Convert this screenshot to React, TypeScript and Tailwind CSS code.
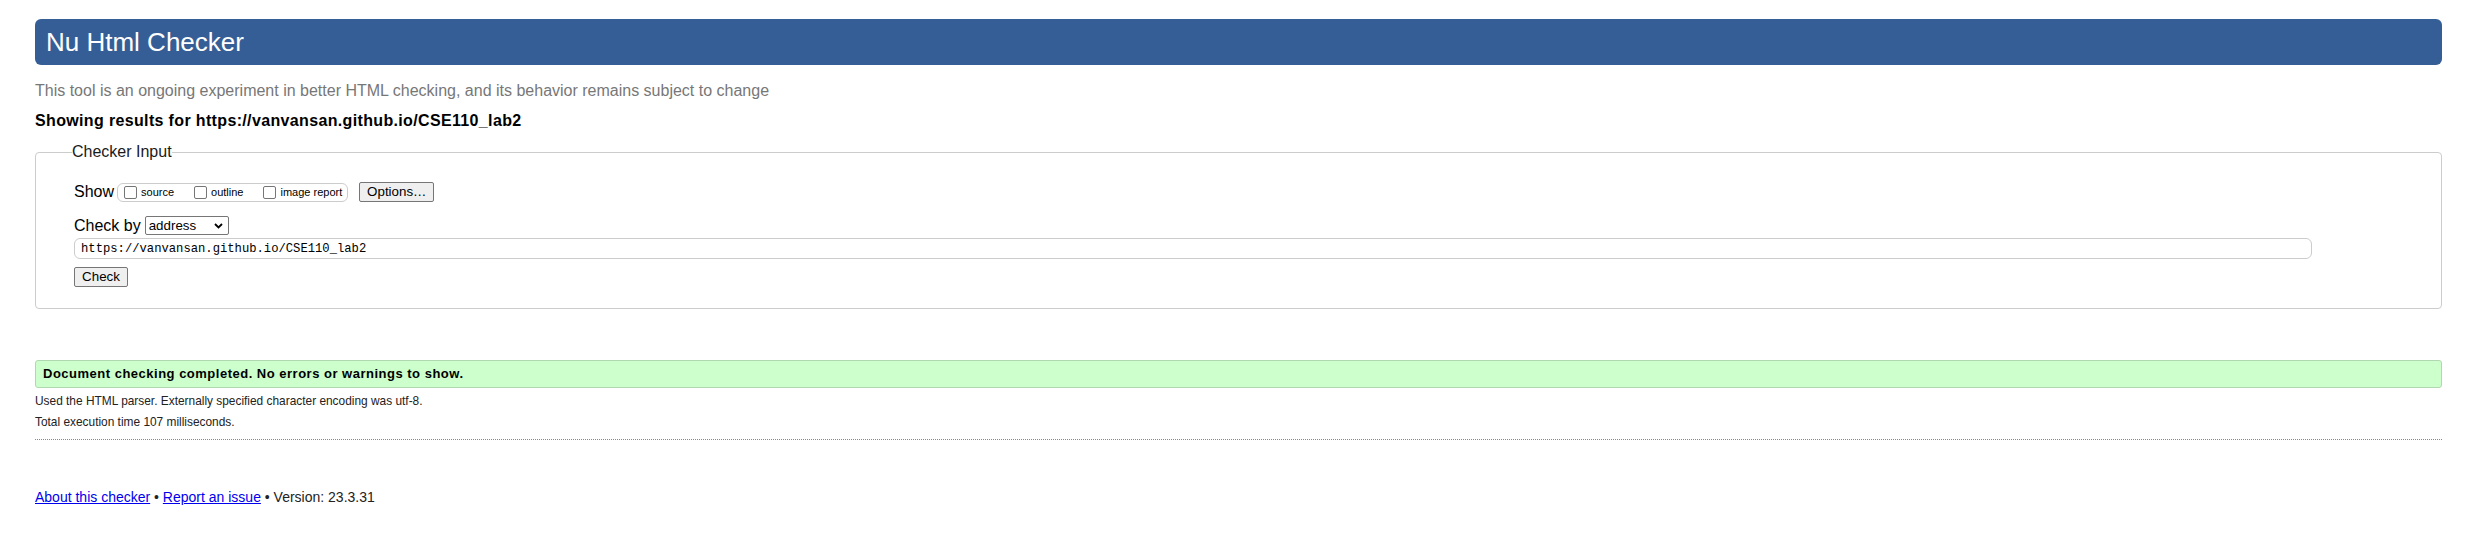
import React from "react";

function Box({ label }: { label: string }) {
  return (
    <label className="flex items-center">
      <input
        type="checkbox"
        className="appearance-none m-0 w-[13px] h-[13px] border border-[#767676] rounded-[2px] bg-white"
      />
      <span className="ml-[4px] text-[11px] leading-[13px] text-black">{label}</span>
    </label>
  );
}

export default function App() {
  return (
    <div
      className="px-[35px] pt-[19px] pb-[20px] bg-white text-black"
      style={{ fontFamily: '"Liberation Sans", Arial, sans-serif' }}
    >
      <div className="h-[46px] bg-[#365e96] rounded-[6px] flex items-center pl-[11px]">
        <h1 className="text-[26px] leading-[30px] text-white font-normal">Nu Html Checker</h1>
      </div>

      <p className="mt-[17px] text-[16px] leading-[18px] text-[#777777]">
        This tool is an ongoing experiment in better HTML checking, and its behavior remains subject to change
      </p>
      <p className="mt-[12px] text-[16px] leading-[18px] font-bold text-black tracking-[0.35px]">
        Showing results for https://vanvansan.github.io/CSE110_lab2
      </p>

      <fieldset className="mt-[13px] border border-[#cccccc] rounded-[4px] pl-[38px] pr-[38px] pb-[21px]">
        <legend className="ml-[-2px] text-[16px] leading-[18px] text-[#1a1a1a]">Checker Input</legend>

        <div className="mt-[21px] h-[20px] flex items-center">
          <span className="text-[16px] leading-[18px]">Show</span>
          <div className="ml-[3px] h-[19px] flex items-center border border-[#cccccc] rounded-[6px] pl-[6px] pr-[5px] gap-[20px]">
            <Box label="source" />
            <Box label="outline" />
            <Box label="image report" />
          </div>
          <button className="ml-[11px] w-[75px] h-[20px] bg-[#efefef] border border-[#767676] rounded-[2px] text-[13.33px] leading-[16px] text-black">
            Options…
          </button>
        </div>

        <div className="mt-[14px] h-[19px] flex items-center">
          <span className="text-[16px] leading-[18px]">Check by</span>
          <div className="ml-[4px] w-[84px] h-[19px] border border-[#767676] rounded-[2px] bg-white flex items-center justify-between pl-[3px] pr-[5px]">
            <span className="text-[13.33px] leading-[16px]">address</span>
            <svg width="9" height="6" viewBox="0 0 9 6">
              <path d="M1 1 L4.5 4.5 L8 1" fill="none" stroke="#000" strokeWidth="1.8" />
            </svg>
          </div>
        </div>

        <input
          readOnly
          value="https://vanvansan.github.io/CSE110_lab2"
          className="mt-[3px] block w-[2238px] h-[21px] border border-[#cccccc] rounded-[6px] pl-[6px] text-[12.2px] leading-[19px] text-black outline-none"
          style={{ fontFamily: '"Liberation Mono", "DejaVu Sans Mono", monospace' }}
        />

        <button className="mt-[8px] block w-[54px] h-[20px] bg-[#efefef] border border-[#767676] rounded-[2px] text-[13.33px] leading-[16px] text-black">
          Check
        </button>
      </fieldset>

      <div className="mt-[51px] h-[28px] bg-[#ccffcc] border border-[#b0d8b0] rounded-[3px] flex items-center pl-[7px]">
        <span className="text-[13px] leading-[16px] font-bold tracking-[0.5px]">
          Document checking completed. No errors or warnings to show.
        </span>
      </div>

      <div className="mt-[3px] text-[11.9px] leading-[21px] text-[#222222]">
        <p>Used the HTML parser. Externally specified character encoding was utf-8.</p>
        <p>Total execution time 107 milliseconds.</p>
      </div>

      <hr className="mt-[6px] border-0 border-t border-dotted border-[#888888]" />

      <p className="mt-[49px] text-[14px] leading-[16px] text-[#222222]">
        <a href="#" className="text-[#0000ee] underline">About this checker</a>
        {" • "}
        <a href="#" className="text-[#0000ee] underline">Report an issue</a>
        {" • Version: 23.3.31"}
      </p>
    </div>
  );
}
